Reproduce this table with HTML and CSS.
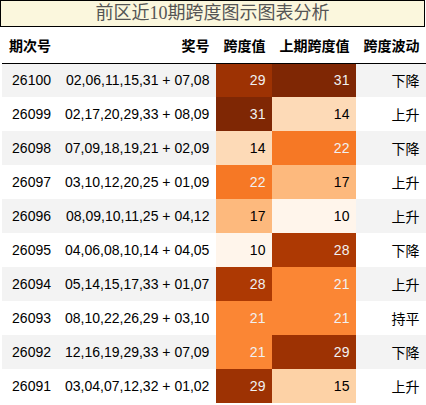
FILE: index.html
```
<!DOCTYPE html>
<html lang="zh">

<head>
    <meta charset="UTF-8">
    <title>前区近10期跨度图示图表分析</title>
    <link rel="stylesheet" href="styles.css">
</head>

<body>
    <div class="wrap">
        <!-- Title -->
        <div class="caption">前区近10期跨度图示图表分析</div>

        <table class="span-table">
            <thead>
                <tr>
                    <th class="c-issue">期次号</th>
                    <th class="c-nums">奖号</th>
                    <th class="c-span">跨度值</th>
                    <th class="c-prev">上期跨度值</th>
                    <th class="c-trend">跨度波动</th>
                </tr>
            </thead>
            <tbody>
                <tr>
                    <td>26100</td>
                    <td>02,06,11,15,31 + 07,08</td>
                    <td class="light" style="background:#9d3203">29</td>
                    <td class="light" style="background:#7f2704">31</td>
                    <td>下降</td>
                </tr>
                <tr>
                    <td>26099</td>
                    <td>02,17,20,29,33 + 08,09</td>
                    <td class="light" style="background:#7f2704">31</td>
                    <td style="background:#fddab7">14</td>
                    <td>上升</td>
                </tr>
                <tr>
                    <td>26098</td>
                    <td>07,09,18,19,21 + 02,09</td>
                    <td style="background:#fddab7">14</td>
                    <td class="light" style="background:#f67825">22</td>
                    <td>下降</td>
                </tr>
                <tr>
                    <td>26097</td>
                    <td>03,10,12,20,25 + 01,09</td>
                    <td class="light" style="background:#f67825">22</td>
                    <td style="background:#fdb97d">17</td>
                    <td>上升</td>
                </tr>
                <tr>
                    <td>26096</td>
                    <td>08,09,10,11,25 + 04,12</td>
                    <td style="background:#fdb97d">17</td>
                    <td style="background:#fff5eb">10</td>
                    <td>上升</td>
                </tr>
                <tr>
                    <td>26095</td>
                    <td>04,06,08,10,14 + 04,05</td>
                    <td style="background:#fff5eb">10</td>
                    <td class="light" style="background:#ad3903">28</td>
                    <td>下降</td>
                </tr>
                <tr>
                    <td>26094</td>
                    <td>05,14,15,17,33 + 01,07</td>
                    <td class="light" style="background:#ad3903">28</td>
                    <td class="light" style="background:#fb8634">21</td>
                    <td>上升</td>
                </tr>
                <tr>
                    <td>26093</td>
                    <td>08,10,22,26,29 + 03,10</td>
                    <td class="light" style="background:#fb8634">21</td>
                    <td class="light" style="background:#fb8634">21</td>
                    <td>持平</td>
                </tr>
                <tr>
                    <td>26092</td>
                    <td>12,16,19,29,33 + 07,09</td>
                    <td class="light" style="background:#fb8634">21</td>
                    <td class="light" style="background:#9d3203">29</td>
                    <td>下降</td>
                </tr>
                <tr>
                    <td>26091</td>
                    <td>03,04,07,12,32 + 01,02</td>
                    <td class="light" style="background:#9d3203">29</td>
                    <td style="background:#fdd2a6">15</td>
                    <td>上升</td>
                </tr>
            </tbody>
        </table>
    </div>
</body>

</html>
```

FILE: styles.css
```
/* Basic Reset */
* {
    margin: 0;
    padding: 0;
    box-sizing: border-box;
}

body {
    font-family: "Liberation Sans", "Noto Sans CJK SC", sans-serif;
    background-color: white;
    color: black;
}

.wrap {
    width: 426px;
}

/* Title */
.caption {
    width: 425px;
    height: 27px;
    border: 1px solid #000;
    background-color: #fbf7dd;
    color: #555;
    font-family: "Liberation Serif", "Noto Sans CJK SC", serif;
    font-size: 18px;
    line-height: 25px;
    text-align: center;
}

/* Table */
.span-table {
    margin-left: 2px;
    border-collapse: collapse;
    table-layout: fixed;
    font-size: 14px;
}

.span-table th,
.span-table td {
    text-align: right;
    padding: 0 7px;
    white-space: nowrap;
}

.span-table th {
    height: 36px;
    font-weight: bold;
    border-bottom: 1px solid #000;
    vertical-align: middle;
}

.span-table td {
    height: 34px;
}

.span-table tbody tr:nth-child(odd) {
    background-color: #f3f3f3;
}

.c-issue { width: 55px; }
.c-nums { width: 158px; }
.c-span { width: 56px; }
.c-prev { width: 84px; }
.c-trend { width: 69px; }

/* dark gradient cells */
.light {
    color: #f1f1f1;
}
```
